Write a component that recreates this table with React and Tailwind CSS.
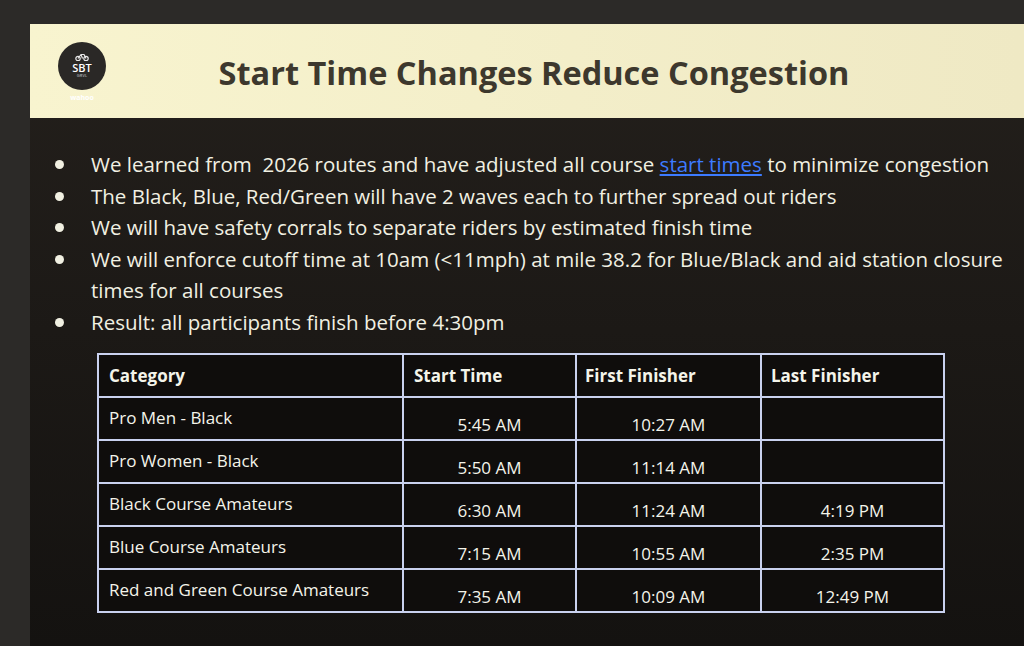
const bullets = [
  ['We learned from\u00a0 2026 routes and have adjusted all course ', 'start times', ' to minimize congestion'],
  ['The Black, Blue, Red/Green will have 2 waves each to further spread out riders'],
  ['We will have safety corrals to separate riders by estimated finish time'],
  ['We will enforce cutoff time at 10am (<11mph) at mile 38.2 for Blue/Black and aid station closure times for all courses'],
  ['Result: all participants finish before 4:30pm'],
]

const rows = [
  ['Pro Men - Black', '5:45 AM', '10:27 AM', ''],
  ['Pro Women - Black', '5:50 AM', '11:14 AM', ''],
  ['Black Course Amateurs', '6:30 AM', '11:24 AM', '4:19 PM'],
  ['Blue Course Amateurs', '7:15 AM', '10:55 AM', '2:35 PM'],
  ['Red and Green Course Amateurs', '7:35 AM', '10:09 AM', '12:49 PM'],
]

function Logo () {
  return (
    <div className="flex flex-col items-center w-[60px]">
      <div className="w-[48px] h-[48px] rounded-full bg-[#2a2826] flex flex-col items-center justify-center text-white leading-none">
        <svg width="16" height="8" viewBox="0 0 16 8" fill="none" stroke="#e8e8e8" strokeWidth="1.2">
          <circle cx="4" cy="5.5" r="2.2" />
          <circle cx="12" cy="5.5" r="2.2" />
          <path d="M4 5.5 L7 1.5 L10 1.5 L12 5.5 M7 1.5 L8.5 5.5" />
        </svg>
        <span className="text-[11px] font-semibold mt-[1px]">SBT</span>
        <span className="text-[4px] tracking-wider mt-[1px] text-gray-300">GRVL</span>
      </div>
      <span className="text-[7px] font-bold text-white mt-[4px] leading-none">wahoo</span>
    </div>
  )
}

export default function App () {
  return (
    <div className="w-[1024px] h-[646px] overflow-hidden bg-[#2c2a28] font-['Open_Sans',sans-serif]">
      <div className="ml-[30px] mt-[24px] h-[622px] bg-gradient-to-b from-[#24201c] to-[#141210]">
        <div className="h-[94px] bg-gradient-to-r from-[#f8f4cf] to-[#efe9c4] flex items-center pl-[22px]">
          <Logo />
          <h1 className="flex-1 text-center pr-[68px] pt-[4px] text-[32.5px] font-bold text-[#3d382d]">Start Time Changes Reduce Congestion</h1>
        </div>
        <ul className="pl-[25px] pt-[31px] pr-[16px] text-[20.5px] leading-[31.5px] text-[#f1f0e2]">
          {bullets.map((b, i) => (
            <li key={i} className="flex">
              <span className="w-[36px] shrink-0 flex pt-[11px]"><span className="w-[9px] h-[9px] rounded-full bg-[#f1f0e2]" /></span>
              <span>
                {b[0]}
                {b[1] && <a href="#" className="text-[#3d7bff] underline">{b[1]}</a>}
                {b[2]}
              </span>
            </li>
          ))}
        </ul>
        <table className="ml-[67px] mt-[15px] border-collapse text-[17px] text-[#f4f4ea] bg-[#0f0d0c]">
          <thead>
            <tr className="h-[43px]">
              <th className="w-[305px] border-2 border-[#c9d1ef] text-left font-bold pl-[10px]">Category</th>
              <th className="w-[173px] border-2 border-[#c9d1ef] text-left font-bold pl-[10px]">Start Time</th>
              <th className="w-[185px] border-2 border-[#c9d1ef] text-left font-bold pl-[8px]">First Finisher</th>
              <th className="w-[183px] border-2 border-[#c9d1ef] text-left font-bold pl-[9px]">Last Finisher</th>
            </tr>
          </thead>
          <tbody>
            {rows.map((r, i) => (
              <tr key={i} className="h-[43px]">
                <td className="border-2 border-[#c9d1ef] pl-[10px] align-top pt-[7px]">{r[0]}</td>
                <td className="border-2 border-[#c9d1ef] text-center align-bottom pb-[2px]">{r[1]}</td>
                <td className="border-2 border-[#c9d1ef] text-center align-bottom pb-[2px]">{r[2]}</td>
                <td className="border-2 border-[#c9d1ef] text-center align-bottom pb-[2px]">{r[3]}</td>
              </tr>
            ))}
          </tbody>
        </table>
      </div>
    </div>
  )
}
